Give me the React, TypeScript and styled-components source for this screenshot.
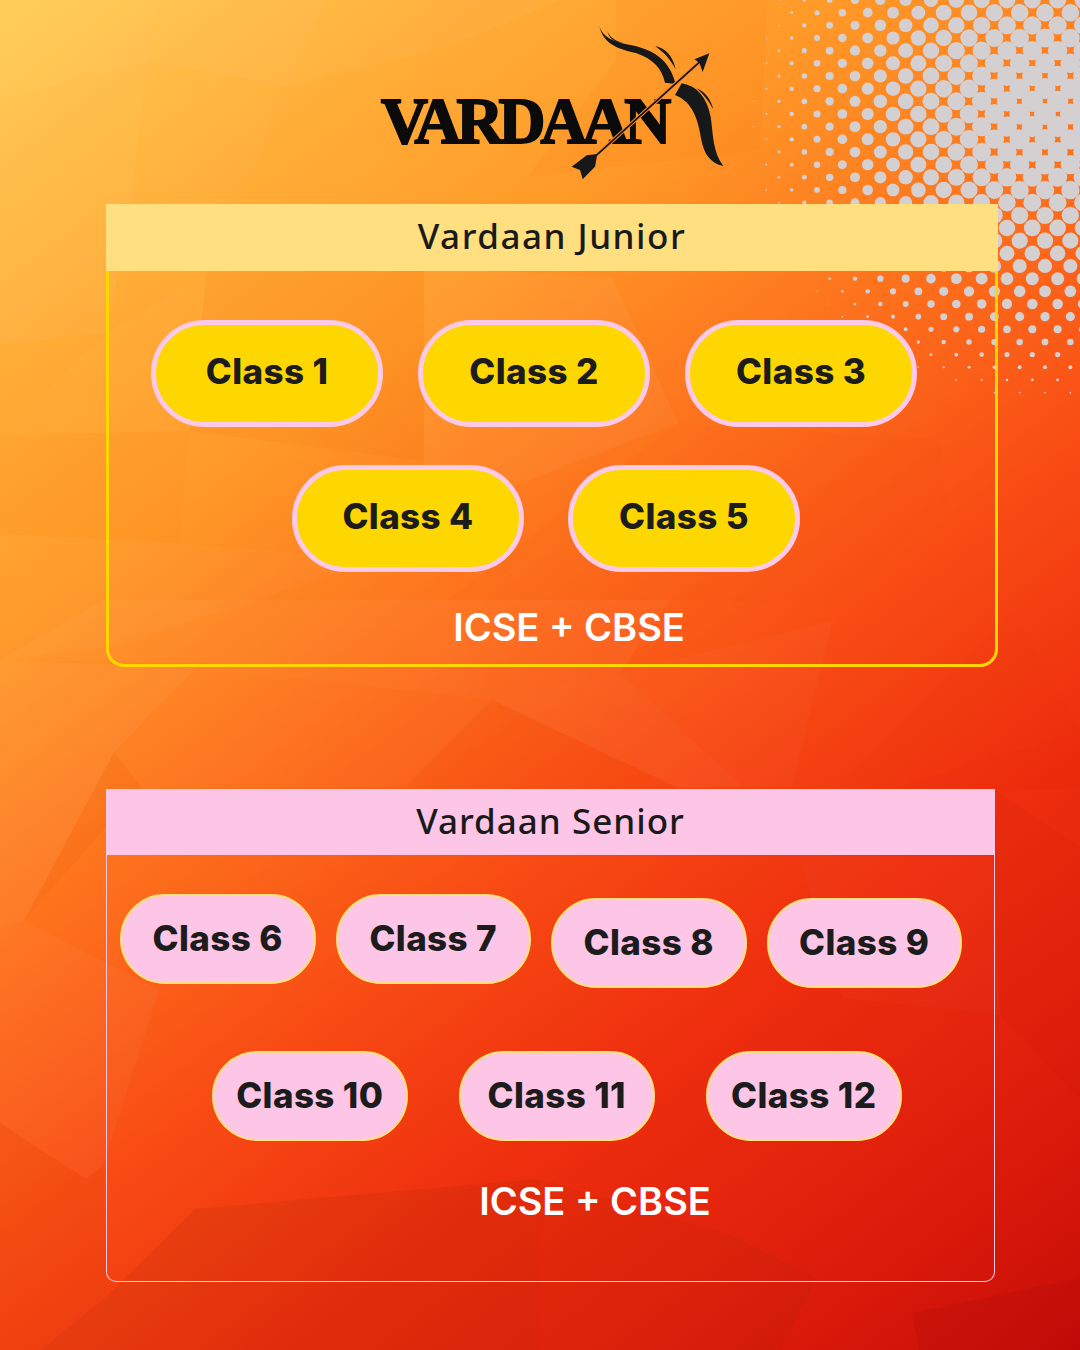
import React from "react";
import styled, { createGlobalStyle } from "styled-components";

const GlobalStyle = createGlobalStyle`
    html, body {
        margin: 0;
        padding: 0;
    }
    body {
        font-family: "Inter", "Liberation Sans", sans-serif;
    }
`

// low-poly facets on top of the gradient: points, tint, opacity
const FACETS: [string, string, number][] = [
    ["0,0 159,0 148,62 0,99", "#fff", 0.07],
    ["159,0 327,0 288,86 148,62", "#fff", 0.05],
    ["327,0 560,0 448,47 288,86", "#fff", 0.035],
    ["0,99 148,62 131,203 107,332 0,345", "#fff", 0.045],
    ["148,62 288,86 207,272 131,203", "#fff", 0.02],
    ["107,332 207,272 190,431 0,435", "#fff", 0.025],
    ["0,435 190,431 179,543 0,534", "#e05a00", 0.04],
    ["207,272 424,267 424,461 190,431", "#e04800", 0.06],
    ["179,543 379,560 114,646 0,660 0,534", "#fff", 0.025],
    ["616,0 768,0 760,150 527,177 616,60", "#e03008", 0.04],
    ["424,267 612,277 678,423 424,520", "#fff", 0.04],
    ["678,423 940,440 947,503 833,603 671,600 448,600", "#d83000", 0.035],
    ["0,660 196,668 114,752 0,690", "#fff", 0.05],
    ["0,660 103,600 330,600 213,663", "#fff", 0.03],
    ["213,663 330,600 448,600 492,700 196,668", "#fff", 0.035],
    ["196,668 492,700 406,787 141,787 114,752", "#fff", 0.02],
    ["448,600 671,600 620,673 492,700", "#fff", 0.03],
    ["492,700 406,787 678,788", "#d02000", 0.05],
    ["492,700 620,673 744,787 678,788", "#fff", 0.04],
    ["620,673 833,620 792,788 744,787", "#fff", 0.025],
    ["1012,610 1080,733 895,788 840,787", "#d02000", 0.03],
    ["1080,733 1080,790 895,788", "#e01000", 0.06],
    ["0,690 114,752 24,921 0,929", "#fff", 0.05],
    ["114,752 141,787 24,921", "#c83000", 0.05],
    ["0,929 24,921 159,990 103,1166 86,1179 0,1123", "#fff", 0.03],
    ["0,1123 86,1179 103,1166 107,1296 41,1350 0,1350", "#b03000", 0.06],
    ["195,1209 540,1179 540,1350 41,1350 107,1296", "#902800", 0.13],
    ["540,1179 730,1235 816,1278 780,1350 540,1350", "#902000", 0.08],
    ["799,856 992,856 1000,1015 843,998", "#fff", 0.02],
    ["912,1313 1080,1278 1080,1350 919,1350", "#800000", 0.1],
    ["992,787 1080,847 1080,1100 1000,1015", "#900800", 0.04],
]

const HALFTONE_CENTER = { x: 1045, y: 110 }
const HALFTONE_REACH = 292
const PITCH = 25.33

// distance from the centre -> dot radius, read off the reference
const DOT_CURVE: [number, number][] = [
    [0, 11],
    [60, 9.7],
    [140, 7.9],
    [196, 5.2],
    [280, 0.9],
    [292, 0.7],
]

const dotRadius = (d: number) => {
    for (let i = 1; i < DOT_CURVE.length; i++) {
        const [d0, r0] = DOT_CURVE[i - 1]
        const [d1, r1] = DOT_CURVE[i]
        if (d <= d1) return r0 + ((r1 - r0) * (d - d0)) / (d1 - d0)
    }
    return 0.7
}

const buildDots = () => {
    const dots: { x: number; y: number; r: number }[] = []
    const rows = [
        { x: 791.7, y: 12.67 },
        { x: 779, y: 25.33 },
    ]
    rows.forEach((row) => {
        for (let i = -2; i < 14; i++) {
            for (let j = -1; j < 18; j++) {
                const x = row.x + PITCH * i
                const y = row.y + PITCH * j
                const d = Math.hypot(x - HALFTONE_CENTER.x, y - HALFTONE_CENTER.y)
                if (d < HALFTONE_REACH) {
                    dots.push({ x, y, r: dotRadius(d) })
                }
            }
        }
    })
    return dots
}

const Backdrop = () => (
    <BackdropSvg viewBox="0 0 1080 1350">
        {FACETS.map(([points, fill, opacity]) => (
            <polygon key={points} points={points} fill={fill} fillOpacity={opacity} />
        ))}
        {buildDots().map((dot) => (
            <circle key={`${dot.x}-${dot.y}`} cx={dot.x} cy={dot.y} r={dot.r} fill="#d4d0d2" />
        ))}
    </BackdropSvg>
)

const BowAndArrow = () => (
    <BowSvg viewBox="0 0 1140 540">
        <path
            d="M718 48 C726 80 760 95 800 103 C860 114 925 135 947 222 L915 218 C905 175 880 148 830 130 C780 118 730 105 718 48 Z"
            fill="#16181a"
        />
        <path d="M742 62 C748 82 768 94 792 100 C768 98 746 88 742 62 Z" fill="#16181a" />
        <path d="M885 108 C915 114 938 135 947 178 C930 145 910 126 885 108 Z" fill="#16181a" />
        <path
            d="M945 255 L965 220 C1012 228 1040 262 1052 320 C1060 375 1058 425 1090 468 C1050 460 1032 430 1024 390 C1015 330 998 275 945 255 Z"
            fill="#16181a"
        />
        <path d="M1010 235 C1035 245 1052 268 1060 298 C1045 272 1030 252 1010 235 Z" fill="#16181a" />
        <line x1="708" y1="437" x2="1020" y2="155" stroke="#f58a2e" strokeWidth="11" />
        <line x1="708" y1="437" x2="1020" y2="155" stroke="#1a1208" strokeWidth="5" />
        <path d="M1048 130 L1003 148 L1018 158 L1028 186 Z" fill="#16181a" />
        <path d="M635 470 L680 436 L712 432 L705 470 L668 508 L660 480 Z" fill="#16181a" />
    </BowSvg>
)

const JUNIOR_ROWS = [
    { labels: ["Class 1", "Class 2", "Class 3"], gap: 35, indent: 42, top: 49 },
    { labels: ["Class 4", "Class 5"], gap: 44, indent: 183, top: 38 },
]

const App = () => {
    return (
        <Page>
            <GlobalStyle />
            <Backdrop />
            <LogoBlock>
                <LogoText>VARDAAN</LogoText>
                <BowAndArrow />
            </LogoBlock>

            <JuniorPanel>
                <JuniorTitle>Vardaan Junior</JuniorTitle>
                <JuniorBody>
                    {JUNIOR_ROWS.map((row) => (
                        <ClassRow key={row.labels[0]} $gap={row.gap} $indent={row.indent} $top={row.top}>
                            {row.labels.map((label) => (
                                <JuniorPill key={label}>{label}</JuniorPill>
                            ))}
                        </ClassRow>
                    ))}
                    <BoardLine $shift={34} $top={33}>ICSE + CBSE</BoardLine>
                </JuniorBody>
            </JuniorPanel>

            <SeniorPanel>
                <SeniorTitle>Vardaan Senior</SeniorTitle>
                <SeniorBody>
                    <ClassRow $gap={20} $indent={13} $top={39}>
                        <SeniorPill>Class 6</SeniorPill>
                        <SeniorPill>Class 7</SeniorPill>
                        <SeniorPill $drop={4}>Class 8</SeniorPill>
                        <SeniorPill $drop={4}>Class 9</SeniorPill>
                    </ClassRow>
                    <ClassRow $gap={51.5} $indent={105} $top={63}>
                        <SeniorPill>Class 10</SeniorPill>
                        <SeniorPill>Class 11</SeniorPill>
                        <SeniorPill>Class 12</SeniorPill>
                    </ClassRow>
                    <BoardLine $shift={89} $top={38}>ICSE + CBSE</BoardLine>
                </SeniorBody>
            </SeniorPanel>
        </Page>
    )
}

export default App

const Page = styled.div`
    position: relative;
    width: 1080px;
    height: 1350px;
    overflow: hidden;
    padding-top: 10px;
    box-sizing: border-box;
    background: linear-gradient(143deg, #ffca4f 0%, #ffb03a 15%, #ff9a28 29%, #fd6f1c 45%, #f84c14 58%, #ee2e0e 72%, #e0200c 85%, #c80c08 100%);
`
const BackdropSvg = styled.svg`
    position: absolute;
    inset: 0;
    width: 1080px;
    height: 1350px;
`
const LogoBlock = styled.div`
    position: relative;
    width: 380px;
    height: 180px;
    margin: 0 0 14px 360px;
`
const LogoText = styled.div`
    padding: 74px 0 0 21px;
    font-family: "Liberation Serif", serif;
    font-weight: bold;
    font-size: 65px;
    line-height: 75px;
    letter-spacing: -5px;
    color: #0b0b0b;
    -webkit-text-stroke: 2px #0b0b0b;
    white-space: nowrap;
`
const BowSvg = styled.svg`
    position: absolute;
    inset: 0;
    width: 380px;
    height: 180px;
`
const JuniorPanel = styled.section`
    position: relative;
    width: 892px;
    margin-left: 106px;
`
const SeniorPanel = styled.section`
    position: relative;
    width: 889px;
    margin: 122px 0 0 106px;
`
const PanelTitle = styled.h2`
    margin: 0;
    height: 67px;
    box-sizing: border-box;
    padding-bottom: 4px;
    display: flex;
    align-items: center;
    justify-content: center;
    font-family: "Noto Sans", sans-serif;
    font-weight: 500;
    font-size: 35px;
    letter-spacing: 1.5px;
    color: #1a1a1a;
`
const JuniorTitle = styled(PanelTitle)`
    background: #ffdf7f;
`
const SeniorTitle = styled(PanelTitle)`
    height: 66px;
    letter-spacing: 1px;
    background: #fdc6e6;
`
const JuniorBody = styled.div`
    height: 396px;
    box-sizing: border-box;
    border: 3px solid #ffd700;
    border-top: none;
    border-radius: 0 0 18px 18px;
`
const SeniorBody = styled.div`
    height: 427px;
    box-sizing: border-box;
    border: 1.5px solid #ffc8e4;
    border-top: none;
    border-radius: 0 0 10px 10px;
`
const ClassRow = styled.div<{ $gap: number; $indent: number; $top: number }>`
    display: flex;
    align-items: flex-start;
    gap: ${(p) => p.$gap}px;
    padding: ${(p) => p.$top}px 0 0 ${(p) => p.$indent}px;
`
const Pill = styled.div`
    display: flex;
    align-items: center;
    justify-content: center;
    box-sizing: border-box;
    border-radius: 999px;
    font-family: "Inter", sans-serif;
    font-weight: 800;
    font-size: 35px;
    letter-spacing: 0.4px;
    color: #1c1c1c;
`
const JuniorPill = styled(Pill)`
    width: 232px;
    height: 107px;
    border: 5.5px solid #fcc9e6;
    background: #ffd700;
    padding-bottom: 6px;
`
const SeniorPill = styled(Pill)<{ $drop?: number }>`
    width: 195.5px;
    height: 90px;
    margin-top: ${(p) => p.$drop || 0}px;
    border: 2.5px solid #ffe07d;
    background: #fdc6e6;
    padding-bottom: 2px;
`
const BoardLine = styled.div<{ $shift: number; $top: number }>`
    padding: ${(p) => p.$top}px 0 0 ${(p) => p.$shift}px;
    text-align: center;
    font-family: "Inter", sans-serif;
    font-weight: 600;
    font-size: 38px;
    line-height: 45px;
    color: #ffffff;
`
